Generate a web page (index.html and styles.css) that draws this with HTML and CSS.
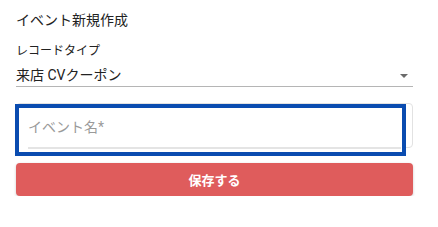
FILE: index.html
```html
<!DOCTYPE html>
<html lang="ja">

<head>
    <meta charset="UTF-8">
    <title>イベント新規作成</title>
    <link rel="stylesheet" href="styles.css">
</head>

<body>
    <div class="container">
        <h2 class="form-title">イベント新規作成</h2>

        <div class="select-group">
            <label class="select-label">レコードタイプ</label>
            <div class="select-box">
                <span class="select-value">来店 CVクーポン</span>
                <span class="select-arrow"></span>
            </div>
        </div>

        <div class="name-card">
            <div class="name-field">
                <span class="placeholder">イベント名*</span>
                <div class="field-line"></div>
            </div>
        </div>

        <button type="button" class="btn-save">保存する</button>
    </div>
</body>

</html>
```

FILE: styles.css
```css
* {
    margin: 0;
    padding: 0;
    box-sizing: border-box;
    font-family: Roboto, 'Noto Sans CJK JP', sans-serif;
}

body {
    background-color: white;
    padding: 0 25px 0 16px;
}

.container {
    display: flex;
    flex-direction: column;
}

.form-title {
    margin-top: 11px;
    font-size: 14px;
    font-weight: 400;
    line-height: 18px;
    color: #222;
}

.select-group {
    margin-top: 14px;
}

.select-label {
    display: block;
    font-size: 12px;
    line-height: 16px;
    color: #222;
}

.select-box {
    display: flex;
    align-items: flex-start;
    justify-content: space-between;
    height: 28px;
    border-bottom: 1px solid #b5b5b5;
}

.select-value {
    margin-top: 6px;
    font-size: 14px;
    color: #222;
    line-height: 20px;
}

.select-arrow {
    width: 0;
    height: 0;
    margin-top: 15px;
    margin-right: 5px;
    border-left: 4px solid transparent;
    border-right: 4px solid transparent;
    border-top: 4px solid #6b6b6b;
}

.name-card {
    height: 45px;
    margin-top: 16px;
    padding: 3px 0 0 1px;
    border: 1px solid #e2e2e2;
    border-radius: 4px;
    background-color: white;
}

.name-field {
    display: flex;
    flex-direction: column;
    justify-content: space-between;
    width: 385px;
    height: 46px;
    padding: 11px 2px 4px 10px;
    outline: 4px solid #0a4cb0;
    outline-offset: -1px;
    background-color: white;
}

.placeholder {
    font-size: 14px;
    color: #9a9a9a;
    line-height: 18px;
}

.field-line {
    height: 2px;
    background-color: #e4e4e4;
}

.btn-save {
    height: 33px;
    margin-top: 15px;
    background-color: #df5c5c;
    color: white;
    border: none;
    border-radius: 4px;
    font-size: 13px;
    font-weight: 700;
    box-shadow: 0 1px 3px rgba(0, 0, 0, 0.2);
}
```
